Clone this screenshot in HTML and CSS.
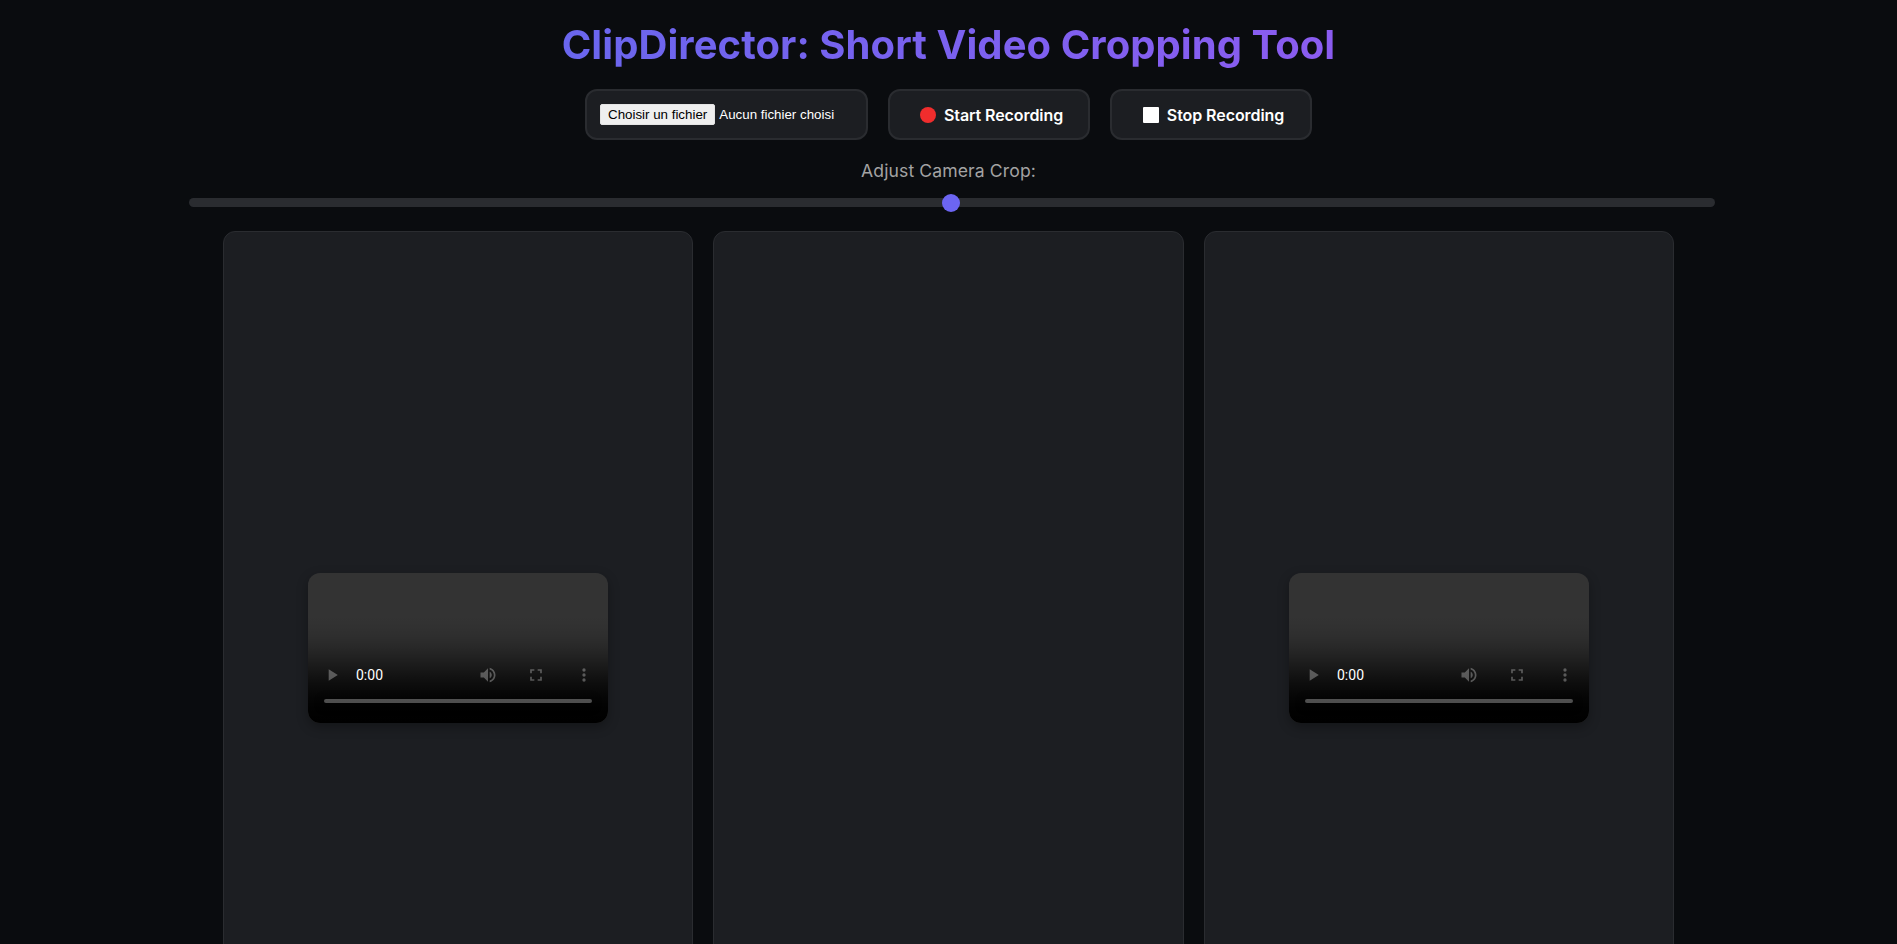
FILE: index.html
```html
<!DOCTYPE html>
<html lang="fr">

<head>
    <meta charset="UTF-8">
    <meta name="viewport" content="width=device-width, initial-scale=1.0">
    <title>ClipDirector</title>
    <link rel="stylesheet" href="styles.css">
</head>

<body>
    <h1>ClipDirector: Short Video Cropping Tool</h1>
    <div class="controls">
        <label class="file-box">
            <span class="file-btn">Choisir un fichier</span>
            <span class="file-name">Aucun fichier choisi</span>
        </label>
        <button class="action"><span class="dot"></span>Start Recording</button>
        <button class="action"><span class="square"></span>Stop Recording</button>
    </div>
    <div class="slider-box">
        <label for="crop">Adjust Camera Crop:</label>
        <input id="crop" type="range" min="0" max="100" value="50">
    </div>
    <div class="panels">
        <div class="panel"><video controls></video></div>
        <div class="panel"></div>
        <div class="panel"><video controls></video></div>
    </div>
</body>

</html>
```

FILE: styles.css
```css
* {
    box-sizing: border-box;
}

body {
    margin: 0;
    padding: 20px;
    background: #0a0c0f;
    color: #fff;
    font-family: Inter, "Liberation Sans", sans-serif;
    text-align: center;
}

h1 {
    width: fit-content;
    margin: 0 auto 20px;
    font-size: 40px;
    line-height: 49px;
    font-weight: 700;
    letter-spacing: 0.06px;
    color: transparent;
    background: linear-gradient(90deg, #6a66ee, #8b5cf0);
    -webkit-background-clip: text;
    background-clip: text;
}

.controls {
    display: flex;
    justify-content: center;
    gap: 20px;
    margin-bottom: 20px;
}

.file-box,
.action {
    display: flex;
    align-items: center;
    height: 51px;
    background: #1c1e22;
    border: 2px solid #2a2c30;
    border-radius: 12px;
    color: #fff;
}

.file-box {
    width: 283px;
    padding: 0 13px;
    font-family: "Liberation Sans", sans-serif;
    font-size: 13.33px;
}

.file-btn {
    padding: 2px 7px;
    margin-right: 4px;
    background: #efefef;
    border: 1px solid #e4e4e4;
    border-radius: 2px;
    color: #000;
}

.action {
    justify-content: center;
    gap: 8px;
    width: 202px;
    padding: 0 0 0 5px;
    font-family: Inter, "Liberation Sans", sans-serif;
    font-size: 16px;
    font-weight: 600;
    letter-spacing: -0.08px;
}

.dot,
.square {
    width: 16px;
    height: 16px;
    background: #fff;
    border-radius: 1px;
}

.dot {
    background: #f02d2d;
    border-radius: 50%;
}

.slider-box label {
    display: block;
    margin-bottom: 17px;
    font-size: 17.6px;
    line-height: 21px;
    letter-spacing: 0.1px;
    color: #a3a3a3;
}

#crop {
    display: block;
    width: 1526px;
    height: 9px;
    margin: 0 0 24px 169px;
    background: #2a2c30;
    border-radius: 5px;
    appearance: none;
    -webkit-appearance: none;
}

#crop::-webkit-slider-thumb {
    -webkit-appearance: none;
    width: 18px;
    height: 18px;
    background: #6c65f2;
    border-radius: 50%;
    transform: translateX(-1px);
}

.panels {
    display: flex;
    justify-content: center;
    gap: 20px;
}

.panel {
    display: flex;
    align-items: center;
    justify-content: center;
    width: 470.4px;
    aspect-ratio: 9 / 16;
    padding-bottom: 2px;
    background: #1c1e22;
    border: 1px solid #2a2c30;
    border-radius: 12px;
}

video {
    width: 300px;
    height: 150px;
    border-radius: 12px;
    box-shadow: 0 4px 12px rgba(0, 0, 0, 0.3);
}
```
